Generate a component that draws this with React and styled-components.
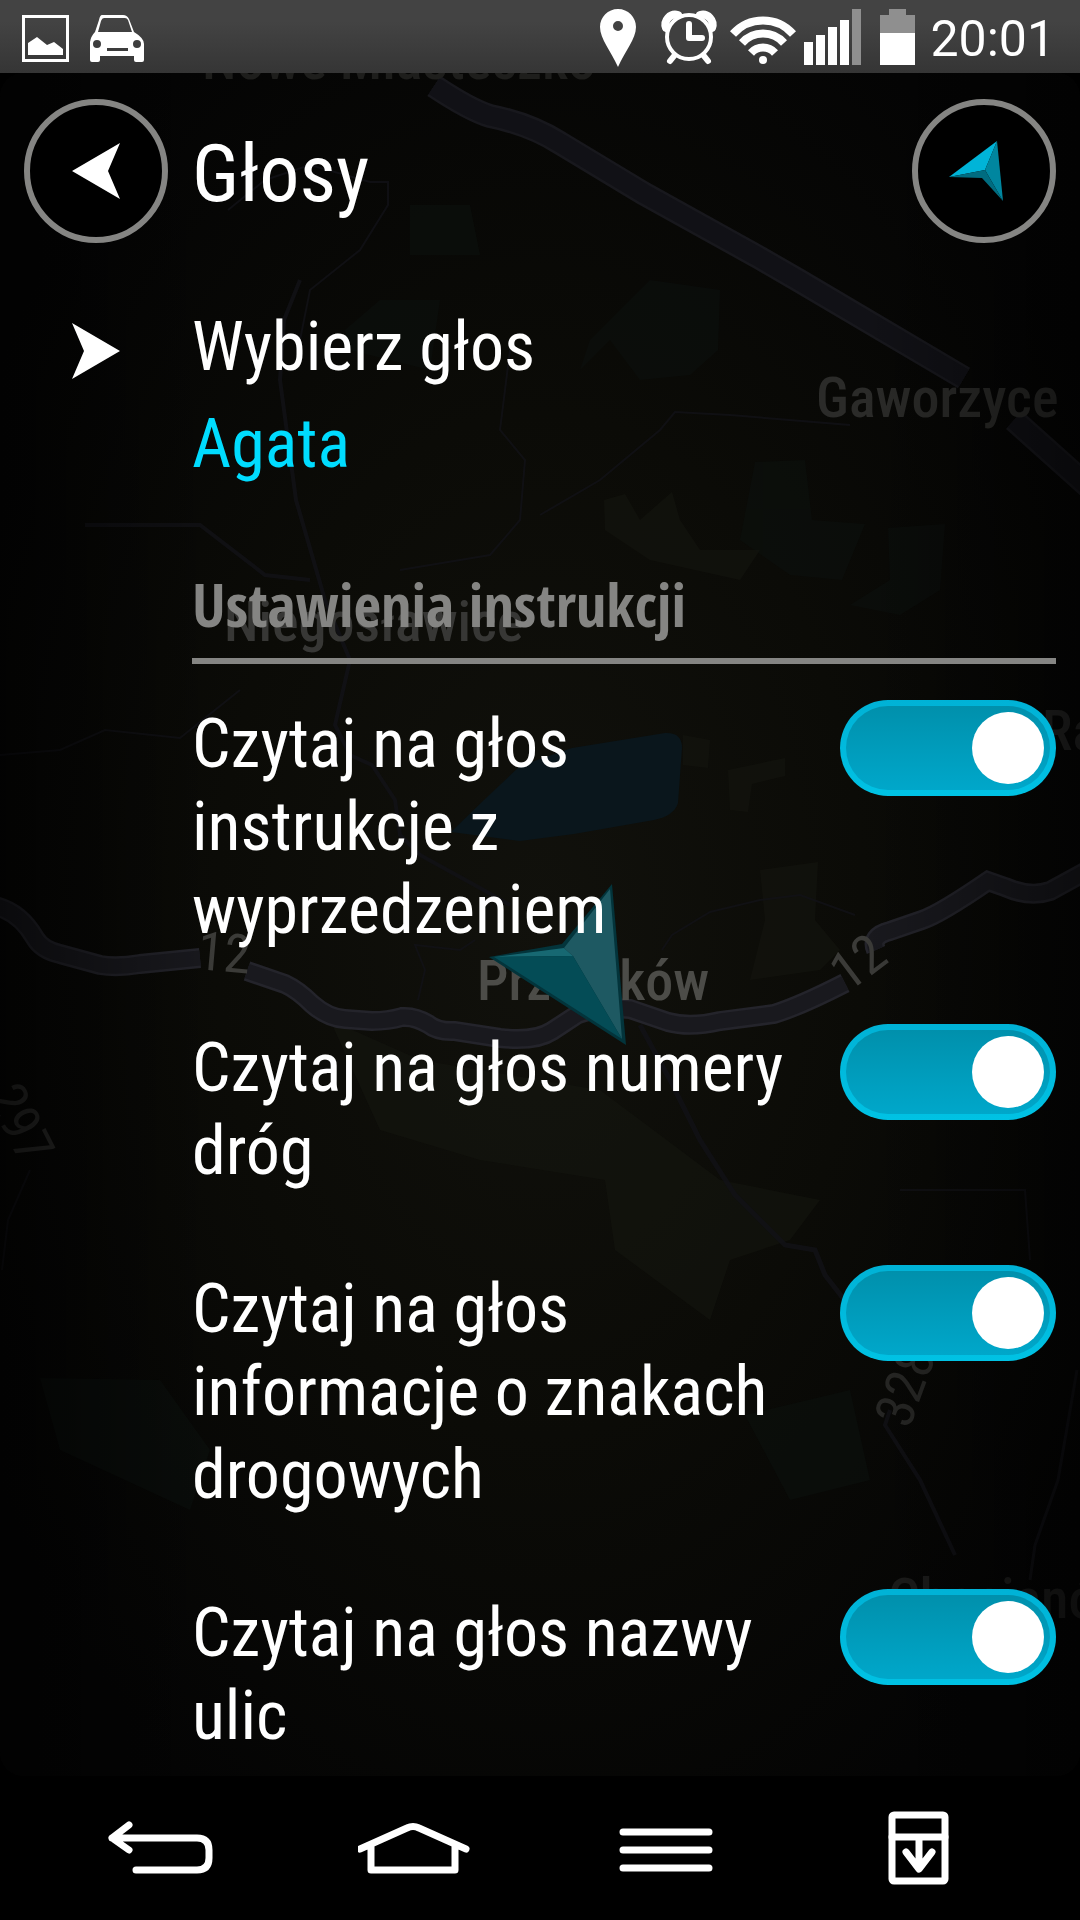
import React, { useState } from 'react';
import styled, { createGlobalStyle } from 'styled-components';

const GlobalStyle = createGlobalStyle`
  * {
    box-sizing: border-box;
  }

  body {
    margin: 0;
    background: #000;
    color: #fff;
    font-family: 'Roboto Condensed', 'Open Sans Condensed', Roboto, sans-serif;
  }

  button {
    border: 0;
    padding: 0;
    background: none;
    color: inherit;
    font: inherit;
    text-align: left;
  }
`;

const Page = styled.div`
  display: flex;
  flex-direction: column;
  min-height: 100vh;
`;

const StatusBar = styled.div`
  display: flex;
  justify-content: space-between;
  height: 73px;
  padding: 0 25px 0 16px;
  background: linear-gradient(#434343 30%, #353535);
`;

const StatusGroup = styled.div`
  display: flex;
  align-items: flex-start;
`;

const Clock = styled.time`
  font-family: Roboto, sans-serif;
  font-size: 50px;
  line-height: 79px;
`;

const Screen = styled.main`
  position: relative;
  flex: 1;
  overflow: hidden;
  padding: 26px 24px 12px;
`;

const MapLayer = styled.svg`
  position: absolute;
  inset: 0;
  width: 100%;
  height: 100%;
  border-radius: 24px;
`;

const Panel = styled.div`
  position: relative;
`;

const Header = styled.header`
  display: grid;
  grid-template-columns: 144px 1fr 144px;
  column-gap: 24px;
  align-items: center;
`;

const Title = styled.h1`
  margin: 0;
  padding-top: 6px;
  font-size: 80px;
  font-weight: 400;
  line-height: 96px;
`;

const RoundButton = styled.button`
  display: flex;
  align-items: center;
  justify-content: center;
  width: 144px;
  height: 144px;
  border: 6px solid #858583;
  border-radius: 50%;
  background: #000;
`;

const VoiceButton = styled.button`
  display: grid;
  grid-template-columns: 144px 1fr;
  column-gap: 24px;
  width: 100%;
  margin-top: 63px;
`;

const VoiceArrow = styled.span`
  display: flex;
  align-items: center;
  justify-content: center;
  height: 90px;
`;

const VoiceText = styled.span`
  display: flex;
  flex-direction: column;
  gap: 14px;
  font-size: 68px;
  line-height: 83px;
`;

const VoiceName = styled.span`
  color: #00dcff;
`;

const Section = styled.section`
  margin-left: 168px;
`;

const SectionTitle = styled.h2`
  margin: 86px 0 36px;
  padding-bottom: 22px;
  border-bottom: 6px solid #858583;
  color: #858583;
  font-family: 'Open Sans Condensed', 'Roboto Condensed', sans-serif;
  font-size: 60px;
  line-height: 64px;
`;

const SettingList = styled.div`
  display: flex;
  flex-direction: column;
  gap: 72px;
`;

const SettingRow = styled.label`
  display: grid;
  grid-template-columns: 1fr 216px;
  column-gap: 24px;
  font-size: 68px;
  line-height: 83px;
`;

const SettingLabel = styled.span`
  padding-top: 3px;
`;

const Toggle = styled.input`
  appearance: none;
  display: flex;
  align-items: center;
  justify-content: ${({ checked }) => (checked ? 'flex-end' : 'flex-start')};
  width: 216px;
  height: 96px;
  margin: 0;
  padding: 0 6px;
  border: 6px solid transparent;
  border-radius: 48px;
  background: ${({ checked }) =>
    checked
      ? `linear-gradient(#0090ac, #00a7ca) padding-box,
         linear-gradient(#00b2d6, #00c2e4) border-box`
      : `linear-gradient(#333, #444) padding-box,
         linear-gradient(#666, #777) border-box`};

  &::before {
    content: '';
    width: 72px;
    height: 72px;
    border-radius: 50%;
    background: #fff;
  }
`;

const NavBar = styled.nav`
  display: grid;
  grid-template-columns: repeat(4, 1fr);
  height: 144px;
  padding: 0 35px;
  background: #000;
`;

const NavButton = styled.button`
  display: flex;
  align-items: center;
  justify-content: center;

  svg {
    fill: none;
    stroke: #fff;
    stroke-width: 7px;
    stroke-linecap: round;
    stroke-linejoin: round;
  }
`;

const settings = [
  { id: 'early', label: 'Czytaj na głos instrukcje z wyprzedzeniem' },
  { id: 'numbers', label: 'Czytaj na głos numery dróg' },
  { id: 'signs', label: 'Czytaj na głos informacje o znakach drogowych' },
  { id: 'streets', label: 'Czytaj na głos nazwy ulic' },
];

const mainRoadWest = 'M-5 906Q20 912 35 938Q42 950 60 954L100 965Q117 968 140 964L200 958';
const mainRoadEast =
  'M247 971L285 984Q298 990 312 1004Q328 1018 345 1019L372 1021Q388 1021 402 1017Q415 1016 428 1024Q438 1032 455 1031L500 1038Q535 1042 552 1031L578 1014Q600 1006 630 1009L668 1022Q690 1028 720 1021L774 1014Q800 1006 845 983';
const mainRoadNorth = 'M876 950Q870 936 890 931L922 920Q940 914 988 881L1005 887Q1030 898 1050 891L1085 872';
const motorway = 'M434 86Q470 110 490 116Q530 124 560 143L643 193L760 258L798 280L964 378M1014 420L1090 488';

const MapBackground = () => (
  <MapLayer viewBox="0 73 1080 1703" preserveAspectRatio="xMidYMid slice" aria-hidden="true">
    <defs>
      <radialGradient id="ground" cx="50%" cy="50%" r="60%">
        <stop offset="0" stopColor="#11110c" />
        <stop offset="0.5" stopColor="#0b0b07" />
        <stop offset="1" stopColor="#040404" />
      </radialGradient>
      <linearGradient id="side">
        <stop offset="0" stopColor="#000" stopOpacity="0.6" />
        <stop offset="0.2" stopColor="#000" stopOpacity="0" />
        <stop offset="0.8" stopColor="#000" stopOpacity="0" />
        <stop offset="1" stopColor="#000" stopOpacity="0.5" />
      </linearGradient>
    </defs>
    <rect y="73" width="1080" height="1703" fill="url(#ground)" />
    {/* fields and woods */}
    <g fill="#0c100e" opacity="0.6">
      <path d="M590 340L650 280L720 290L718 350L690 375L640 380L610 340L580 370Z" />
      <path d="M755 462L805 460L812 520L865 524L842 580L790 575L740 540Z" />
      <path d="M888 528L945 524L940 590L900 615L850 605L890 580Z" />
      <path d="M345 330L380 300L440 300L430 370L350 350Z" />
      <path d="M410 205L470 205L480 255L410 255Z" />
      <path d="M745 1415L850 1390L870 1480L790 1500Z" />
      <path d="M40 1378L160 1380L210 1450L190 1510L60 1450Z" />
    </g>
    <g fill="#14150f" opacity="0.6">
      <path d="M604 500L625 494L640 520L672 492L680 520L700 550L760 550L740 580L650 560L605 530Z" />
      <path d="M330 1020L420 1060L600 1090L720 1180L820 1200L790 1240L730 1260L710 1320L615 1250L605 1180L480 1160L380 1130Z" />
      <path d="M728 770L785 758L785 776L752 784L748 812L730 810Z" />
      <path d="M760 870L818 862L815 920L840 950L820 970L750 980L765 920Z" />
      <path d="M683 735L710 740L708 768L683 765Z" />
    </g>
    <path
      d="M451 832L484 800L520 766L572 748L665 733Q682 732 682 748L678 803Q674 816 654 820L574 834L520 841Z"
      fill="#0a161c"
    />
    {/* side roads */}
    <g fill="none" stroke="#121217" strokeWidth="4" opacity="0.8">
      <path d="M300 280L284 320L280 380L296 500L325 600L350 660L335 725L350 755L372 765L395 800L400 835L420 855L480 888L510 905" />
      <path d="M640 1025L670 1080L700 1140L735 1195L785 1245L815 1250L825 1275L860 1320" strokeWidth="5" />
      <path d="M890 1410L885 1425L920 1480L955 1555" />
      <path d="M1077 1370L1058 1480L1035 1545L1030 1580" strokeWidth="3" />
      <path d="M85 525L200 525L265 575L310 580" />
      <path d="M400 570L490 555L520 520L525 460L500 430L510 350" strokeWidth="2" />
      <path d="M228 210L265 180L310 165L370 182L388 182L388 205L360 250L310 290L300 340" strokeWidth="2" />
      <path d="M540 515L600 480L660 430L675 412L730 415L850 425" strokeWidth="2" />
      <path d="M662 950L672 935L710 912L760 900L800 895L855 915" strokeWidth="2" />
      <path d="M418 1000L425 970L415 945L460 950L475 940" strokeWidth="2" />
      <path d="M0 755L60 750L105 730L180 738L240 690" strokeWidth="2" />
      <path d="M900 1190L1025 1190L1030 1260" strokeWidth="2" />
      <path d="M30 1170L8 1220L2 1270" strokeWidth="2" />
    </g>
    <g fill="none" stroke="#18181d" strokeWidth="24">
      <path d={motorway} />
      <path d={motorway} stroke="#111116" strokeWidth="19" />
    </g>
    {[mainRoadWest, mainRoadEast, mainRoadNorth].map((d) => (
      <g key={d} fill="none">
        <path d={d} stroke="#24242b" strokeWidth="20" />
        <path d={d} stroke="#19191e" strokeWidth="15" />
      </g>
    ))}
    {/* place names and road numbers */}
    <g fill="#3b3b38" fontSize="56" fontWeight="500">
      <text x="202" y="79" fill="#1e1e1c">Nowe Miasteczko</text>
      <text x="816" y="417" fill="#2b2b29">Gaworzyce</text>
      <text x="224" y="641" fill="#373735">Niegosławice</text>
      <text x="477" y="1000" fill="#4c4c48">Przemków</text>
      <text x="1042" y="750" fill="#262625">Radwanice</text>
      <text x="888" y="1618" fill="#1c1c1b">Chocianów</text>
      <g fontSize="54" fontWeight="400">
        <text transform="translate(196 969) rotate(5)">12</text>
        <text transform="translate(848 993) rotate(-37)">12</text>
        <text transform="translate(-14 1096) rotate(63)" fill="#2b2b29">297</text>
        <text transform="translate(909 1430) rotate(-70)" fill="#272725">328</text>
      </g>
    </g>
    {/* own position */}
    <path d="M489 957L562 944L612 884L626 1045Z" fill="#03343b" />
    <path d="M494 957L564 948L573 956Z" fill="#176872" />
    <path d="M564 948L610 889L622 1039L573 956Z" fill="#1e5962" />
    <path d="M494 957L573 956L622 1039Z" fill="#044c56" />
    <rect y="73" width="1080" height="1703" fill="url(#side)" />
  </MapLayer>
);

const StatusIcons = () => (
  <>
    <svg width="60" height="73" fill="#fff">
      <path
        fillRule="evenodd"
        d="M24 9C34 9 42 17 42 27C42 39 31 51 24 67C17 51 6 39 6 27C6 17 14 9 24 9ZM24 21A5 5 0 1 0 24 31A5 5 0 1 0 24 21Z"
      />
    </svg>
    <svg width="70" height="73" fill="none" stroke="#fff" strokeLinecap="round">
      <path d="M12 28A10 10 0 0 1 24 15M46 15A10 10 0 0 1 58 28" strokeWidth="8" />
      <circle cx="35" cy="37" r="22" fill="#3f3f3f" strokeWidth="4" />
      <path d="M35 24V38H48" strokeWidth="6" strokeLinejoin="round" />
      <path d="M20 56L16 61M50 56L54 61" strokeWidth="6" />
    </svg>
    <svg width="76" height="73" fill="none" stroke="#fff" strokeWidth="8">
      <path d="M9 34A40 40 0 0 1 69 34M18 43A28 28 0 0 1 60 43M27 53A16 16 0 0 1 51 53" />
      <circle cx="39" cy="60" r="4" fill="#fff" stroke="none" />
    </svg>
    <svg width="68" height="73" fill="#fff">
      <path d="M4 42h9v23h-9zM16 35h9v30h-9zM28 27h9v38h-9zM40 20h9v45h-9z" />
      <path d="M52 9h9v56h-9z" fill="#8f8f8f" />
    </svg>
    <svg width="62" height="73">
      <path d="M21 9h17v6h9v18h-35v-18h9z" fill="#8f8f8f" />
      <path d="M12 33h35v32h-35z" fill="#fff" />
    </svg>
  </>
);

const App = () => {
  const [enabled, setEnabled] = useState({
    early: true,
    numbers: true,
    signs: true,
    streets: true,
  });

  const toggle = (id) => setEnabled({ ...enabled, [id]: !enabled[id] });

  return (
    <Page>
      <GlobalStyle />
      <StatusBar>
        <StatusGroup>
          <svg width="68" height="73" fill="#fff">
            <path fillRule="evenodd" d="M6 15H53V62H6ZM9 18V59H50V18Z" />
            <path d="M12 55V43L21 37L31 45L38 42L47 49V55Z" />
          </svg>
          <svg width="66" height="73" fill="#fff">
            <path
              fillRule="evenodd"
              d="M18 15H39Q43 15 45 19L50 32Q60 38 60 44V60Q60 62 58 62H52Q50 62 50 60V56H16V60Q16 62 14 62H8Q6 62 6 60V42Q7 36 11 32L15 20Q16 15 18 15ZM20 18Q18 18 17 21L14 32H48L44 20Q43 18 41 18ZM13 40A4 4 0 1 0 13 48A4 4 0 1 0 13 40ZM53 40A4 4 0 1 0 53 48A4 4 0 1 0 53 40ZM23 48V51H44V48Z"
            />
          </svg>
        </StatusGroup>
        <StatusGroup>
          <StatusIcons />
          <Clock>20:01</Clock>
        </StatusGroup>
      </StatusBar>
      <Screen>
        <MapBackground />
        <Panel>
          <Header>
            <RoundButton aria-label="Wstecz">
              <svg width="48" height="56" fill="#fff">
                <path d="M0 28L48 0L36 28L48 56Z" />
              </svg>
            </RoundButton>
            <Title>Głosy</Title>
            <RoundButton aria-label="Mapa">
              <svg width="72" height="64">
                <path d="M1 38L49 2L37 31Z" fill="#00b4d8" />
                <path d="M49 2L55 62L37 31Z" fill="#00869f" />
                <path d="M1 38L37 31L55 62L34 39Z" fill="#006c80" />
              </svg>
            </RoundButton>
          </Header>
          <VoiceButton>
            <VoiceArrow>
              <svg width="48" height="56" fill="#fff">
                <path d="M48 28L0 0L12 28L0 56Z" />
              </svg>
            </VoiceArrow>
            <VoiceText>
              <span>Wybierz głos</span>
              <VoiceName>Agata</VoiceName>
            </VoiceText>
          </VoiceButton>
          <Section>
            <SectionTitle>Ustawienia instrukcji</SectionTitle>
            <SettingList>
              {settings.map(({ id, label }) => (
                <SettingRow key={id} htmlFor={id}>
                  <SettingLabel>{label}</SettingLabel>
                  <Toggle
                    id={id}
                    type="checkbox"
                    checked={enabled[id]}
                    onChange={() => toggle(id)}
                  />
                </SettingRow>
              ))}
            </SettingList>
          </Section>
        </Panel>
      </Screen>
      <NavBar>
        <NavButton aria-label="Cofnij">
          <svg width="112" height="80">
            <path d="M24 17L7 30L24 42M7 30H92Q104 30 104 42V50Q104 62 92 62H31" />
          </svg>
        </NavButton>
        <NavButton aria-label="Ekran główny">
          <svg width="112" height="80">
            <path d="M2 41L49 20Q55 17 61 20L108 41M13 38V62H97V38" />
          </svg>
        </NavButton>
        <NavButton aria-label="Menu">
          <svg width="112" height="80">
            <path d="M13 24H99M13 42H99M13 60H99" />
          </svg>
        </NavButton>
        <NavButton aria-label="Powiadomienia">
          <svg width="112" height="80">
            <rect x="29" y="7" width="53" height="66" rx="2" />
            <path d="M29 29H82M56 30V60M43 44L56 61L69 44" />
          </svg>
        </NavButton>
      </NavBar>
    </Page>
  );
};

export default App;
